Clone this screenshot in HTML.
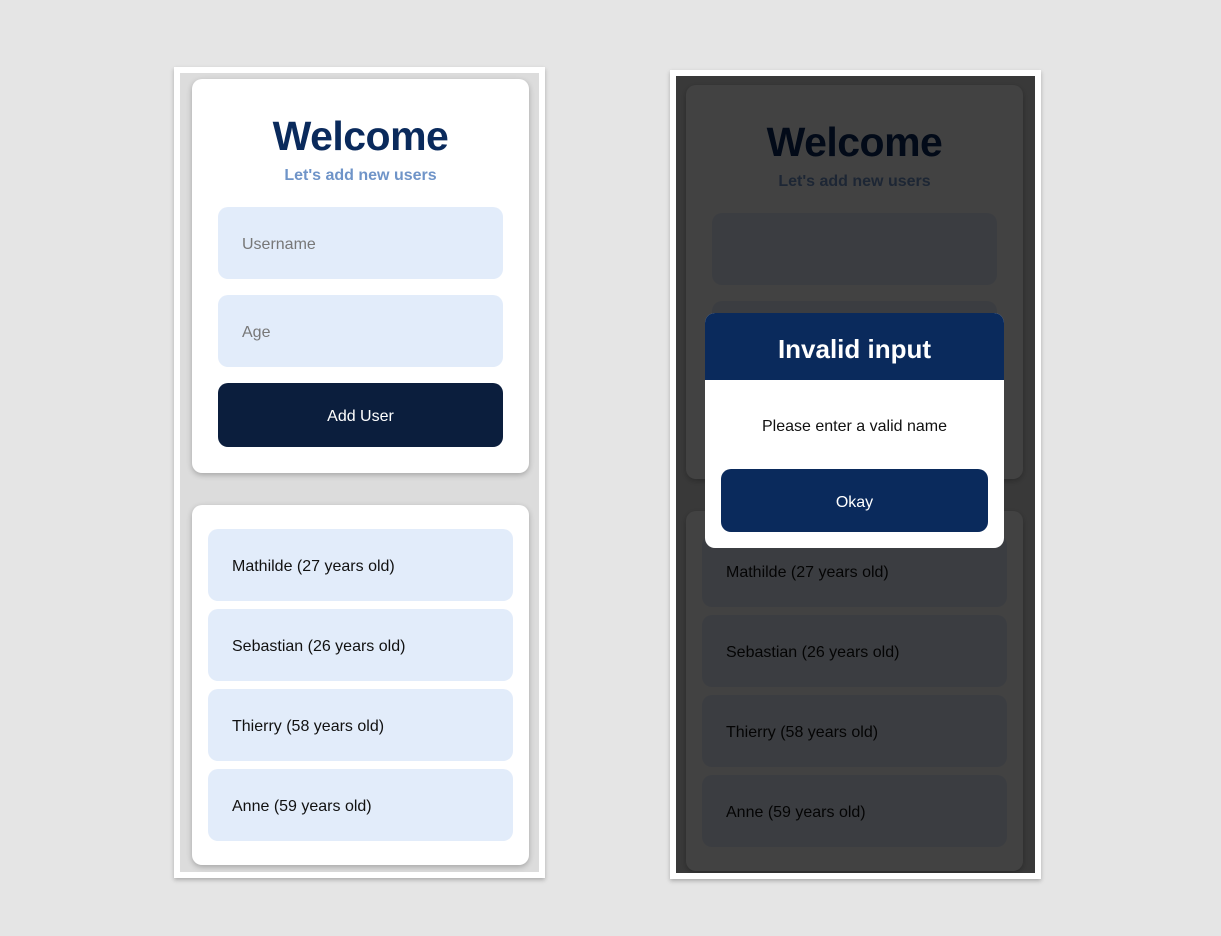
<!DOCTYPE html>
<html><head><meta charset="utf-8"><style>
*{box-sizing:border-box;margin:0;padding:0}
body{width:1221px;height:936px;background:#e5e5e5;font-family:"Liberation Sans",sans-serif;position:relative;overflow:hidden}
.frame{position:absolute;width:371px;height:811px;background:#fff;padding:6px;box-shadow:0 2px 4px rgba(0,0,0,.25)}
.inner{position:relative;width:359px;height:799px;background:#dcdcdc;overflow:hidden}
.card{position:absolute;left:12px;width:337px;background:#fff;border-radius:10px;box-shadow:0 2px 6px rgba(0,0,0,.25)}
h1{position:absolute;top:34px;width:100%;text-align:center;font-size:41px;color:#0a2a5c;font-weight:bold;letter-spacing:-0.5px}
.sub{position:absolute;top:88px;width:100%;text-align:center;font-size:16px;font-weight:bold;color:#6f94c8}
.inp{position:absolute;left:26px;width:285px;height:72px;background:#e2ecfa;border-radius:10px;padding-left:24px;line-height:76px;font-size:16px;color:#777}
.btn{position:absolute;left:26px;top:304px;width:285px;height:64px;background:#0b1e3d;border-radius:10px;color:#fff;text-align:center;line-height:68px;font-size:16px}
.item{position:absolute;left:16px;width:305px;height:72px;background:#e2ecfa;border-radius:10px;padding-left:24px;line-height:76px;font-size:16px;color:#111}
.ov{position:absolute;inset:0;background:rgba(0,0,0,.74)}
.modal{position:absolute;left:705px;top:313px;width:299px;height:235px;background:#fff;border-radius:10px;overflow:hidden}
.mh{height:67px;background:#0a2a5c;color:#fff;font-size:26px;font-weight:bold;text-align:center;line-height:72px}
.mb{text-align:center;font-size:16px;margin-top:38px;color:#111}
.ok{position:absolute;left:16px;top:156px;width:267px;height:63px;background:#0a2a5c;border-radius:10px;color:#fff;text-align:center;line-height:67px;font-size:16px}
</style></head><body>
<div class="frame" style="left:174px;top:67px"><div class="inner">
<div class="card" style="top:6px;height:394px">
<h1>Welcome</h1><div class="sub">Let's add new users</div>
<div class="inp" style="top:128px">Username</div>
<div class="inp" style="top:216px">Age</div>
<div class="btn">Add User</div></div>
<div class="card" style="top:432px;height:360px">
<div class="item" style="top:24px">Mathilde (27 years old)</div>
<div class="item" style="top:104px">Sebastian (26 years old)</div>
<div class="item" style="top:184px">Thierry (58 years old)</div>
<div class="item" style="top:264px">Anne (59 years old)</div></div>
</div></div>
<div class="frame" style="left:670px;top:70px;height:809px"><div class="inner" style="height:797px">
<div class="card" style="top:9px;height:394px;left:10px">
<h1>Welcome</h1><div class="sub">Let's add new users</div>
<div class="inp" style="top:128px"></div>
<div class="inp" style="top:216px"></div>
<div class="btn">Add User</div></div>
<div class="card" style="top:435px;height:360px;left:10px">
<div class="item" style="top:24px">Mathilde (27 years old)</div>
<div class="item" style="top:104px">Sebastian (26 years old)</div>
<div class="item" style="top:184px">Thierry (58 years old)</div>
<div class="item" style="top:264px">Anne (59 years old)</div></div>
<div class="ov"></div>
</div></div>
<div class="modal"><div class="mh">Invalid input</div><div class="mb">Please enter a valid name</div><div class="ok">Okay</div></div>
</body></html>
